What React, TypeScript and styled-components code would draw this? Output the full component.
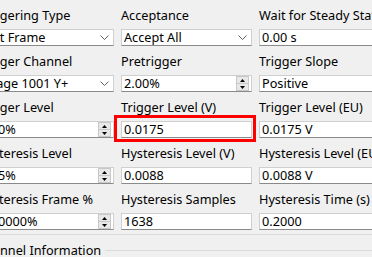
import styled, { createGlobalStyle } from 'styled-components'

const GlobalStyle = createGlobalStyle`
  html, body {
    margin: 0;
    padding: 0;
    background: #f0f0f0;
  }
  * {
    box-sizing: border-box;
  }
`

type Kind = 'combo' | 'text' | 'spin'

type FieldDef = {
  label: string
  value: string
  kind: Kind
  marked?: boolean
}

const fields: FieldDef[] = [
  {label: 'Triggering Type', value: 'Last Frame', kind: 'combo'},
  {label: 'Acceptance', value: 'Accept All', kind: 'combo'},
  {label: 'Wait for Steady State', value: '0.00 s', kind: 'text'},
  {label: 'Trigger Channel', value: 'Image 1001 Y+', kind: 'combo'},
  {label: 'Pretrigger', value: '2.00%', kind: 'spin'},
  {label: 'Trigger Slope', value: 'Positive', kind: 'combo'},
  {label: 'Trigger Level', value: '10.0%', kind: 'spin'},
  {label: 'Trigger Level (V)', value: '0.0175', kind: 'text', marked: true},
  {label: 'Trigger Level (EU)', value: '0.0175 V', kind: 'text'},
  {label: 'Hysteresis Level', value: '0.05%', kind: 'spin'},
  {label: 'Hysteresis Level (V)', value: '0.0088', kind: 'text'},
  {label: 'Hysteresis Level (EU)', value: '0.0088 V', kind: 'text'},
  {label: 'Hysteresis Frame %', value: '10.0000%', kind: 'spin'},
  {label: 'Hysteresis Samples', value: '1638', kind: 'text'},
  {label: 'Hysteresis Time (s)', value: '0.2000', kind: 'text'},
]

const Chevron = () => (
  <svg width="9" height="5" viewBox="0 0 9 5">
    <path d="M0.5 0.5 L4.5 4.5 L8.5 0.5" fill="none" stroke="#606060" strokeWidth="1" />
  </svg>
)

const Control = ({field}: {field: FieldDef}) => {
  if (field.kind === 'combo') {
    return (
      <Box>
        <Value>{field.value}</Value>
        <DropArrow>
          <Chevron />
        </DropArrow>
      </Box>
    )
  }
  if (field.kind === 'spin') {
    return (
      <Box>
        <Value>{field.value}</Value>
        <Spinner>
          <SpinHalf>
            <svg width="5" height="3" viewBox="0 0 5 3">
              <path d="M0 3 L2.5 0 L5 3 Z" fill="#000" />
            </svg>
          </SpinHalf>
          <SpinHalf>
            <svg width="5" height="3" viewBox="0 0 5 3">
              <path d="M0 0 L2.5 3 L5 0 Z" fill="#000" />
            </svg>
          </SpinHalf>
        </Spinner>
      </Box>
    )
  }
  return (
    <Box>
      <Value>{field.value}</Value>
    </Box>
  )
}

const App = () => {
  return (
    <Viewport>
      <GlobalStyle />
      <Settings>
        <Grid>
          {fields.map(field => (
            <Cell key={field.label}>
              <Label>{field.label}</Label>
              <ControlSlot>
                <Control field={field} />
                {field.marked && <Highlight />}
              </ControlSlot>
            </Cell>
          ))}
        </Grid>
      </Settings>
      <ChannelGroup>
        <GroupTitle>Channel Information</GroupTitle>
        <GroupRule />
      </ChannelGroup>
    </Viewport>
  )
}

export default App

const Viewport = styled.div`
  width: 372px;
  height: 257px;
  overflow: hidden;
  background: #f0f0f0;
  font-family: 'Noto Sans', 'DejaVu Sans', sans-serif;
  font-size: 12.7px;
  color: #000;
`

const Settings = styled.section`
  margin-left: -23px;
  padding-top: 7px;
  padding-bottom: 4px;
  border-bottom: 1px solid #dcdcdc;
  width: 430px;
`

const Grid = styled.div`
  display: grid;
  grid-template-columns: 137px 131px 131px;
  column-gap: 7px;
  row-gap: 7px;
`

const Cell = styled.div`
  display: flex;
  flex-direction: column;
`

const Label = styled.label`
  display: block;
  height: 16px;
  line-height: 16px;
  margin-bottom: 6px;
  white-space: nowrap;
`

const ControlSlot = styled.div`
  position: relative;
`

const Box = styled.div`
  display: flex;
  align-items: center;
  height: 17px;
  background: #fff;
  border: 1px solid #d0d0d0;
  border-bottom-color: #8a8a8a;
  padding-left: 2px;
`

const Value = styled.span`
  flex: 1;
  line-height: 15px;
  white-space: nowrap;
  overflow: hidden;
`

const DropArrow = styled.span`
  display: flex;
  align-items: center;
  justify-content: center;
  width: 17px;
  height: 15px;
`

const Spinner = styled.span`
  display: flex;
  flex-direction: column;
  width: 13px;
  height: 15px;
  margin-right: 2px;
  border: 1px solid #c8c8c8;
  background: #e8e8e8;
`

const SpinHalf = styled.span`
  flex: 1;
  display: flex;
  align-items: center;
  justify-content: center;
  & + & {
    border-top: 1px solid #c8c8c8;
  }
`

const Highlight = styled.div`
  position: absolute;
  left: -7px;
  top: -6px;
  right: -4px;
  bottom: -4px;
  border: 3px solid #ff0000;
  pointer-events: none;
`

const ChannelGroup = styled.div`
  display: flex;
  align-items: center;
  margin-top: 7px;
  margin-left: -23px;
  gap: 4px;
`

const GroupTitle = styled.span`
  white-space: nowrap;
  line-height: 16px;
`

const GroupRule = styled.div`
  flex: 1;
  height: 1px;
  background: #dcdcdc;
`
